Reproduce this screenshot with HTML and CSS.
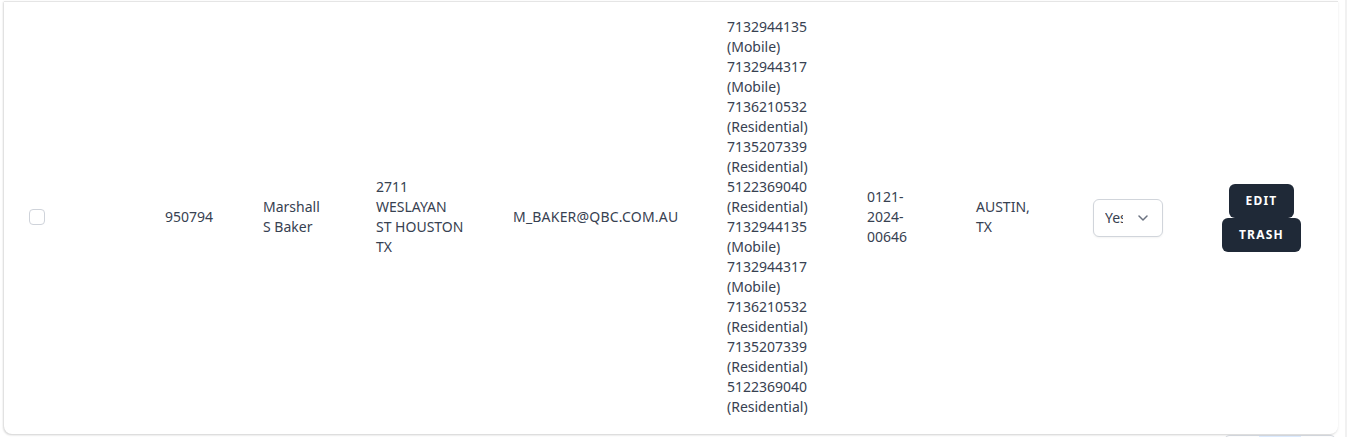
FILE: index.html
```html
<!DOCTYPE html>
<html lang="en">
<head>
<meta charset="utf-8">
<title>Records</title>
<link rel="stylesheet" href="styles.css">
</head>
<body>
<div class="page">
  <div class="main">
    <div class="card">
      <table class="records">
        <colgroup>
          <col class="c-check"><col class="c-id"><col class="c-name"><col class="c-addr"><col class="c-email">
          <col class="c-phone"><col class="c-case"><col class="c-city"><col class="c-select"><col class="c-actions">
        </colgroup>
        <tbody>
          <tr>
            <td><span class="checkbox"></span></td>
            <td>950794</td>
            <td class="lines">Marshall<br>S Baker</td>
            <td class="lines">2711<br>WESLAYAN<br>ST HOUSTON<br>TX</td>
            <td class="email">M_BAKER@QBC.COM.AU</td>
            <td class="lines">7132944135<br>(Mobile)<br>7132944317<br>(Mobile)<br>7136210532<br>(Residential)<br>7135207339<br>(Residential)<br>5122369040<br>(Residential)<br>7132944135<br>(Mobile)<br>7132944317<br>(Mobile)<br>7136210532<br>(Residential)<br>7135207339<br>(Residential)<br>5122369040<br>(Residential)</td>
            <td class="lines">0121-<br>2024-<br>00646</td>
            <td class="lines">AUSTIN,<br>TX</td>
            <td>
              <div class="select-wrap">
                <div class="select"><span class="select-text">Yes</span></div>
                <svg class="chev" width="10" height="6" viewBox="0 0 10 6"><path d="M1 1l4 4 4-4" fill="none" stroke="#6b7280" stroke-width="1.5" stroke-linecap="round" stroke-linejoin="round"/></svg>
              </div>
            </td>
            <td>
              <div class="actions">
                <button class="btn">Edit</button>
                <button class="btn">Trash</button>
              </div>
            </td>
          </tr>
        </tbody>
      </table>
    </div>
    <div class="pager-row">
      <div class="pager"><span class="pg"></span><span class="pg active"></span><span class="pg"></span></div>
    </div>
  </div>
  <div class="rail"></div>
</div>
</body>
</html>
```

FILE: styles.css
```css
html, body {
  margin: 0;
  padding: 0;
  background: #fff;
}
body {
  font-family: "Noto Sans", "Open Sans", sans-serif;
  font-size: 14px;
  line-height: 20px;
  color: #374151;
  overflow: hidden;
}
.page {
  display: flex;
  height: 437px;
  overflow: hidden;
}
.main {
  width: 1345px;
  height: 437px;
  padding: 1px 0 0 4px;
  box-sizing: border-box;
  overflow: hidden;
}
.rail {
  flex: 1;
  border-left: 2px solid #f1f1f1;
}
.card {
  width: 1334px;
  background: #fff;
  border-top: 1px solid #e5e5e5;
  border-radius: 0 0 8px 8px;
  box-shadow: -1px 1px 2px rgba(0,0,0,0.12), 0 1px 3px rgba(0,0,0,0.08);
  overflow: hidden;
}
.records {
  width: 1334px;
  table-layout: fixed;
  border-collapse: collapse;
}
.c-check { width: 137px; }
.c-id { width: 98px; }
.c-name { width: 113px; }
.c-addr { width: 137px; }
.c-email { width: 214px; }
.c-phone { width: 140px; }
.c-case { width: 109px; }
.c-city { width: 117px; }
.c-select { width: 129px; }
.c-actions { width: 140px; }
.records td {
  padding: 15px 24px 17px 24px;
  vertical-align: middle;
  white-space: nowrap;
}
.records td:first-child {
  padding-left: 25px;
}
.records td.email {
  letter-spacing: 0.2px;
}
.checkbox {
  display: block;
  width: 14px;
  height: 14px;
  border: 1px solid #cfd3da;
  border-radius: 4px;
  background: #fff;
}
.select-wrap {
  position: relative;
  width: 70px;
  height: 38px;
  margin-top: 2px;
}
.select {
  display: flex;
  align-items: center;
  width: 70px;
  height: 38px;
  box-sizing: border-box;
  border: 1px solid #d1d5db;
  border-radius: 6px;
  background: #fff;
  padding: 0 0 0 11px;
  box-shadow: 0 1px 2px rgba(0,0,0,0.05);
}
.select-text {
  display: block;
  width: 18px;
  overflow: hidden;
  white-space: nowrap;
}
.chev {
  position: absolute;
  left: 45px;
  top: 16px;
  pointer-events: none;
}
.actions {
  display: inline-flex;
  flex-direction: column;
  align-items: center;
  padding-top: 2px;
}
.btn {
  display: inline-flex;
  align-items: center;
  padding: 8px 16px;
  background: #1f2937;
  border: 1px solid transparent;
  border-radius: 6px;
  font-family: "Noto Sans", sans-serif;
  font-size: 12px;
  line-height: 16px;
  font-weight: 700;
  color: #fff;
  text-transform: uppercase;
  letter-spacing: 0.1em;
}
.pager-row {
  display: flex;
  justify-content: flex-end;
  padding-right: 10px;
  margin-top: 1px;
}
.pager {
  display: flex;
  width: 110px;
  height: 30px;
  border: 1px solid #d1d5db;
  border-radius: 4px;
  box-sizing: border-box;
}
.pg {
  flex: 1;
}
.pg.active {
  flex: 0 0 42px;
  background: #dbeafe;
}
```
